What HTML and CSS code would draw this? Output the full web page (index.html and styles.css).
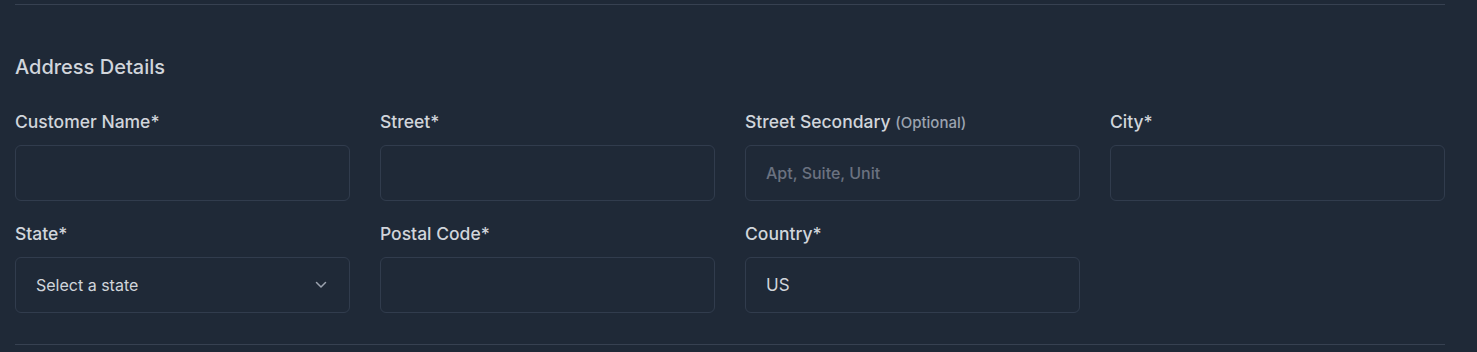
FILE: index.html
```html
<!DOCTYPE html>
<html lang="en">
<head>
<meta charset="utf-8">
<title>Address Details</title>
<link rel="stylesheet" href="styles.css">
</head>
<body>
<section class="section">
  <h2 class="section-title">Address Details</h2>
  <div class="grid">
    <div class="field">
      <label class="label">Customer Name*</label>
      <div class="input"></div>
    </div>
    <div class="field">
      <label class="label">Street*</label>
      <div class="input"></div>
    </div>
    <div class="field">
      <label class="label">Street Secondary <span class="optional">(Optional)</span></label>
      <div class="input"><span class="placeholder">Apt, Suite, Unit</span></div>
    </div>
    <div class="field">
      <label class="label">City*</label>
      <div class="input"></div>
    </div>
    <div class="field">
      <label class="label">State*</label>
      <div class="input select">
        <span class="select-text">Select a state</span>
        <svg class="chevron" width="12" height="8" viewBox="0 0 12 8" fill="none" stroke="#9ca3af" stroke-width="1.5" stroke-linecap="round" stroke-linejoin="round"><path d="M1.5 1.5 L6 6 L10.5 1.5"/></svg>
      </div>
    </div>
    <div class="field">
      <label class="label">Postal Code*</label>
      <div class="input"></div>
    </div>
    <div class="field">
      <label class="label">Country*</label>
      <div class="input"><span class="value">US</span></div>
    </div>
  </div>
</section>
</body>
</html>
```
FILE: styles.css
```css
html, body {
  margin: 0;
  padding: 0;
  background: #1f2937;
  font-family: Inter, "Noto Sans", "Liberation Sans", sans-serif;
}
.section {
  margin: 4px 0 0 15px;
  width: 1430px;
  border-top: 1px solid #374151;
  border-bottom: 1px solid #374151;
  padding: 48px 0 31px;
}
.section-title {
  margin: 0 0 29px;
  font-size: 20px;
  line-height: 28px;
  font-weight: 500;
  color: #d1d5db;
}
.grid {
  display: grid;
  grid-template-columns: repeat(4, 335px);
  column-gap: 30px;
  row-gap: 21px;
}
.field {
  display: flex;
  flex-direction: column;
}
.label {
  height: 24px;
  font-size: 17.5px;
  line-height: 24px;
  font-weight: 500;
  color: #d1d5db;
  margin-bottom: 11px;
  white-space: nowrap;
}
.optional {
  font-size: 15px;
  font-weight: 500;
  color: #9ca3af;
}
.input {
  box-sizing: border-box;
  height: 56px;
  border: 1px solid #313c4d;
  border-radius: 6px;
  padding: 0 20px;
  display: flex;
  align-items: center;
  font-size: 16px;
}
.placeholder {
  color: #6b7280;
  font-size: 16px;
  font-weight: 500;
}
.value {
  color: #d1d5db;
  font-size: 17px;
}
.select {
  justify-content: space-between;
}
.select-text {
  color: #d1d5db;
  font-size: 16px;
}
.chevron {
  margin-right: 2px;
}
```
